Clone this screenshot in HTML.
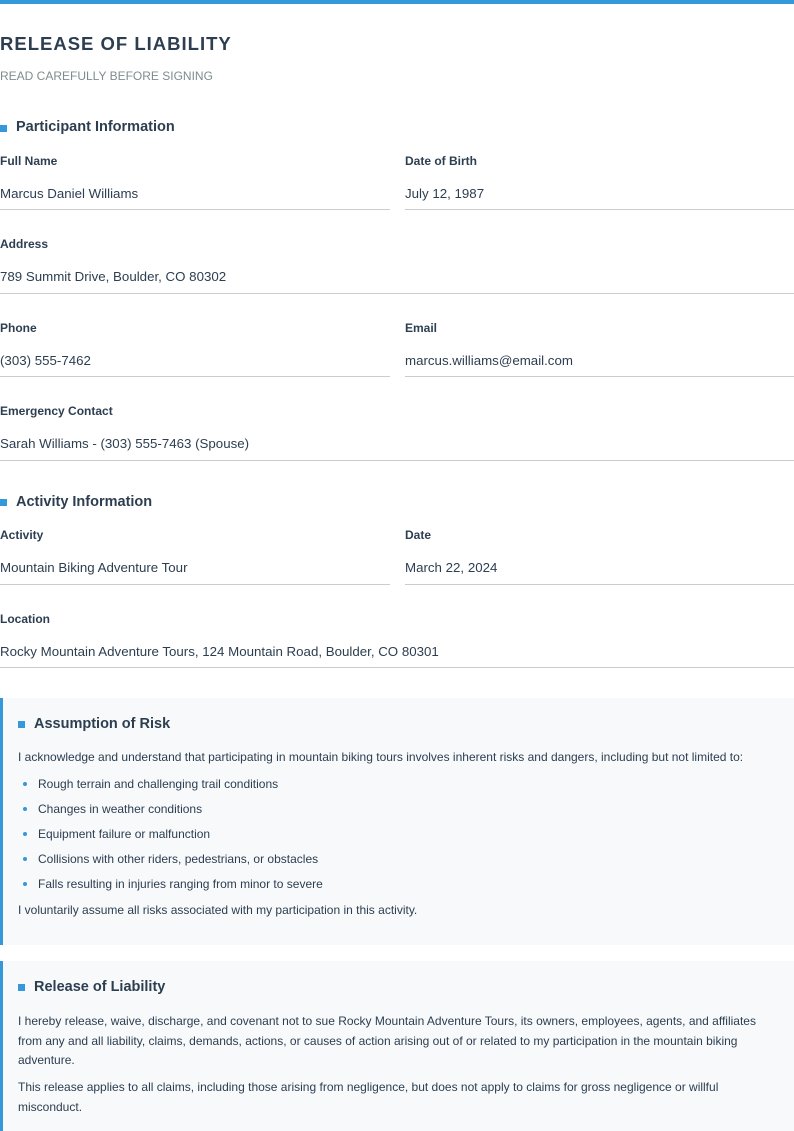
<!DOCTYPE html>
<html><head><meta charset="utf-8"><style>
*{margin:0;padding:0;box-sizing:border-box}
body{width:794px;height:1123px;overflow:hidden;background:#fff;font-family:"Liberation Sans",Arial,sans-serif;color:#2c3e50;position:relative}
.a{position:absolute;white-space:nowrap}
.bar{position:absolute;left:0;top:0;width:794px;height:4px;background:#3498db}
.t{font-size:18.5px;font-weight:bold;letter-spacing:1px;line-height:20px}
.s{font-size:12px;color:#7f8c8d;line-height:14px}
.h{font-size:14.5px;font-weight:bold;line-height:16px}
.sq{position:absolute;width:7px;height:7px;background:#3498db}
.l{font-size:12px;font-weight:bold;line-height:14px}
.v{font-size:13.3px;line-height:15px}
.ln{position:absolute;height:1px;background:#ccc}
.box{position:absolute;left:0;width:794px;background:#f7f9fb;border-left:3px solid #3498db}
.p{font-size:12px;line-height:14px;color:#2c3e50}
.b{position:absolute;width:4px;height:4px;border-radius:50%;background:#3498db}
</style></head><body>
<div class="bar"></div>
<div class="a t" style="left:0;top:34px">RELEASE OF LIABILITY</div>
<div class="a s" style="left:0;top:69px">READ CAREFULLY BEFORE SIGNING</div>

<div class="sq" style="left:0;top:125px"></div><div class="a h" style="left:16px;top:119px">Participant Information</div>
<div class="a l" style="left:0;top:154px">Full Name</div><div class="a l" style="left:405px;top:154px">Date of Birth</div>
<div class="a v" style="left:0;top:186px">Marcus Daniel Williams</div><div class="a v" style="left:405px;top:186px">July 12, 1987</div>
<div class="ln" style="left:0;top:209px;width:390px"></div><div class="ln" style="left:405px;top:209px;width:389px"></div>

<div class="a l" style="left:0;top:237px">Address</div>
<div class="a v" style="left:0;top:269px">789 Summit Drive, Boulder, CO 80302</div>
<div class="ln" style="left:0;top:293px;width:794px"></div>

<div class="a l" style="left:0;top:321px">Phone</div><div class="a l" style="left:405px;top:321px">Email</div>
<div class="a v" style="left:0;top:353px">(303) 555-7462</div><div class="a v" style="left:405px;top:353px">marcus.williams@email.com</div>
<div class="ln" style="left:0;top:376px;width:390px"></div><div class="ln" style="left:405px;top:376px;width:389px"></div>

<div class="a l" style="left:0;top:404px">Emergency Contact</div>
<div class="a v" style="left:0;top:436px">Sarah Williams - (303) 555-7463 (Spouse)</div>
<div class="ln" style="left:0;top:460px;width:794px"></div>

<div class="sq" style="left:0;top:499px"></div><div class="a h" style="left:16px;top:494px">Activity Information</div>
<div class="a l" style="left:0;top:528px">Activity</div><div class="a l" style="left:405px;top:528px">Date</div>
<div class="a v" style="left:0;top:560px">Mountain Biking Adventure Tour</div><div class="a v" style="left:405px;top:560px">March 22, 2024</div>
<div class="ln" style="left:0;top:584px;width:390px"></div><div class="ln" style="left:405px;top:584px;width:389px"></div>

<div class="a l" style="left:0;top:612px">Location</div>
<div class="a v" style="left:0;top:644px">Rocky Mountain Adventure Tours, 124 Mountain Road, Boulder, CO 80301</div>
<div class="ln" style="left:0;top:667px;width:794px"></div>

<div class="box" style="top:698px;height:247px"></div>
<div class="sq" style="left:18px;top:721px"></div><div class="a h" style="left:34px;top:716px">Assumption of Risk</div>
<div class="a p" style="left:18px;top:750px">I acknowledge and understand that participating in mountain biking tours involves inherent risks and dangers, including but not limited to:</div>
<div class="b" style="left:23px;top:782px"></div><div class="a p" style="left:38px;top:777px">Rough terrain and challenging trail conditions</div>
<div class="b" style="left:23px;top:807px"></div><div class="a p" style="left:38px;top:802px">Changes in weather conditions</div>
<div class="b" style="left:23px;top:832px"></div><div class="a p" style="left:38px;top:827px">Equipment failure or malfunction</div>
<div class="b" style="left:23px;top:857px"></div><div class="a p" style="left:38px;top:852px">Collisions with other riders, pedestrians, or obstacles</div>
<div class="b" style="left:23px;top:882px"></div><div class="a p" style="left:38px;top:877px">Falls resulting in injuries ranging from minor to severe</div>
<div class="a p" style="left:18px;top:903px">I voluntarily assume all risks associated with my participation in this activity.</div>

<div class="box" style="top:961px;height:170px"></div>
<div class="sq" style="left:18px;top:984px"></div><div class="a h" style="left:34px;top:979px">Release of Liability</div>
<div class="a p" style="left:18px;top:1012px;line-height:19.5px;white-space:normal;width:760px">I hereby release, waive, discharge, and covenant not to sue Rocky Mountain Adventure Tours, its owners, employees, agents, and affiliates from any and all liability, claims, demands, actions, or causes of action arising out of or related to my participation in the mountain biking adventure.</div>
<div class="a p" style="left:18px;top:1078px;line-height:19.5px;white-space:normal;width:760px">This release applies to all claims, including those arising from negligence, but does not apply to claims for gross negligence or willful misconduct.</div>
</body></html>
